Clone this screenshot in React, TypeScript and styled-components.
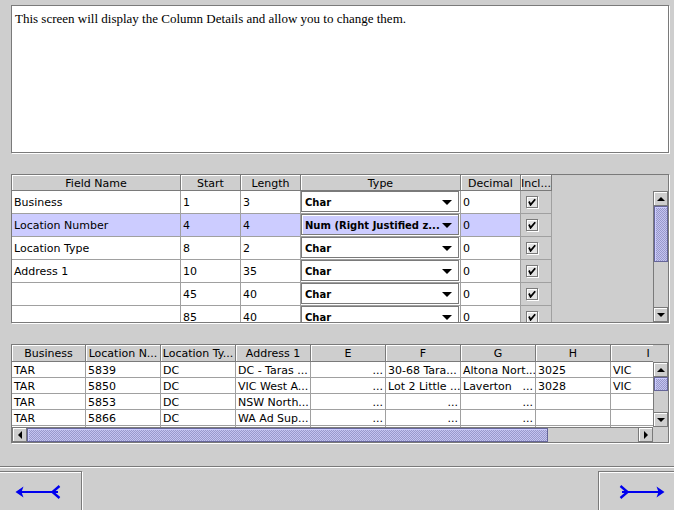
import React from 'react';
import styled, { createGlobalStyle } from 'styled-components';

const GlobalStyle = createGlobalStyle`
  html, body { margin: 0; padding: 0; background: #cecece; }
  #root { width: 674px; height: 510px; }
`;

const BG = '#cecece';
const DARK = '#7a7a7a';
const GRID = '#a0a0a0';
const SEL = '#ccccff';

const Screen = styled.div`
  width: 674px;
  height: 510px;
  overflow: hidden;
  background: ${BG};
  display: flex;
  flex-direction: column;
  font-family: "DejaVu Sans", sans-serif;
  font-size: 11px;
  color: #000;
`;

const Description = styled.div`
  flex: none;
  margin: 5px 5px 0 11px;
  height: 148px;
  box-sizing: border-box;
  background: #fff;
  border: 1px solid ${DARK};
  box-shadow: 1px 1px 0 #fff;
  font-family: "Liberation Serif", serif;
  font-size: 13px;
  line-height: 16px;
  padding: 5px 3px;
`;

const Pane = styled.div<{ $top: number; $height: number; $rows: string }>`
  flex: none;
  margin: ${p => p.$top}px 5px 0 11px;
  height: ${p => p.$height}px;
  box-sizing: border-box;
  border: 1px solid ${DARK};
  box-shadow: 1px 1px 0 #fff;
  display: grid;
  grid-template-columns: minmax(0, 1fr) 15px;
  grid-template-rows: ${p => p.$rows};
  overflow: hidden;
  background: ${BG};
`;

const Clip = styled.div`
  overflow: hidden;
  min-width: 0;
  min-height: 0;
`;

const Corner = styled.div`
  background: ${BG};
`;

const Row = styled.div<{ $cols: string; $h: number }>`
  display: grid;
  grid-template-columns: ${p => p.$cols};
  height: ${p => p.$h}px;
  width: max-content;
`;

const HeaderCell = styled.div`
  box-sizing: border-box;
  height: 100%;
  border-right: 1px solid ${DARK};
  border-bottom: 1px solid ${DARK};
  box-shadow: inset 1px 1px 0 #fff;
  background: ${BG};
  display: flex;
  align-items: center;
  justify-content: center;
  padding-top: 1px;
  white-space: nowrap;
  overflow: hidden;
`;

const Cell = styled.div<{ $bg?: string; $right?: boolean }>`
  box-sizing: border-box;
  height: 100%;
  border-right: 1px solid ${GRID};
  border-bottom: 1px solid ${GRID};
  background: ${p => p.$bg ?? '#fff'};
  padding: 1px 2px 0 2px;
  display: flex;
  align-items: center;
  justify-content: ${p => (p.$right ? 'flex-end' : 'space-between')};
  white-space: nowrap;
  overflow: hidden;
`;

const ComboCell = styled.div`
  box-sizing: border-box;
  height: 100%;
  border-right: 1px solid ${GRID};
  border-bottom: 1px solid ${GRID};
  background: #fff;
`;

const Combo = styled.div<{ $sel?: boolean }>`
  box-sizing: border-box;
  width: calc(100% - 1px);
  height: calc(100% - 1px);
  border: 1px solid ${DARK};
  box-shadow: inset 1px 1px 0 #fff, 1px 1px 0 #fff;
  background: ${p => (p.$sel ? SEL : '#fff')};
  display: flex;
  align-items: center;
  padding: 1px 6px 0 3px;
  font-weight: bold;
  font-size: 10px;
  white-space: nowrap;
  overflow: hidden;
`;

const ComboText = styled.span`
  flex: 1;
  overflow: hidden;
`;

const DownTri = styled.span<{ $size?: number }>`
  width: 0;
  height: 0;
  border-left: ${p => p.$size ?? 5}px solid transparent;
  border-right: ${p => p.$size ?? 5}px solid transparent;
  border-top: ${p => p.$size ?? 5}px solid #000;
`;

const UpTri = styled.span`
  width: 0;
  height: 0;
  border-left: 4px solid transparent;
  border-right: 4px solid transparent;
  border-bottom: 4px solid #000;
`;

const LeftTri = styled.span`
  width: 0;
  height: 0;
  border-top: 4px solid transparent;
  border-bottom: 4px solid transparent;
  border-right: 4px solid #000;
`;

const RightTri = styled.span`
  width: 0;
  height: 0;
  border-top: 4px solid transparent;
  border-bottom: 4px solid transparent;
  border-left: 4px solid #000;
`;

const CheckCell = styled.div`
  box-sizing: border-box;
  height: 100%;
  border-right: 1px solid ${GRID};
  border-bottom: 1px solid ${GRID};
  background: ${BG};
  display: flex;
  align-items: center;
  padding-left: 5px;
`;

const CheckBox = styled.div`
  box-sizing: border-box;
  width: 12px;
  height: 12px;
  border: 1px solid ${DARK};
  box-shadow: inset 1px 1px 0 #fff, 1px 1px 0 #fff;
  background: #e4e4e4;
  display: flex;
  align-items: center;
  justify-content: center;
`;

const VScroll = styled.div`
  display: flex;
  flex-direction: column;
  background: ${BG};
  min-height: 0;
`;

const HScroll = styled.div`
  display: flex;
  flex-direction: row;
  background: ${BG};
  min-width: 0;
`;

const ScrollButton = styled.div`
  flex: none;
  box-sizing: border-box;
  width: 15px;
  height: 15px;
  border: 1px solid ${DARK};
  box-shadow: inset 1px 1px 0 #fff;
  background: ${BG};
  display: flex;
  align-items: center;
  justify-content: center;
`;

const Track = styled.div<{ $horizontal?: boolean }>`
  flex: 1;
  display: flex;
  flex-direction: ${p => (p.$horizontal ? 'row' : 'column')};
  border-${p => (p.$horizontal ? 'top' : 'left')}: 1px solid ${DARK};
  background: ${BG};
  min-height: 0;
  min-width: 0;
`;

const Thumb = styled.div<{ $size: number; $horizontal?: boolean }>`
  flex: none;
  box-sizing: border-box;
  ${p => (p.$horizontal ? `width: ${p.$size}px;` : `height: ${p.$size}px;`)}
  border: 1px solid #666699;
  background-color: #9999cc;
  background-image: repeating-conic-gradient(#c4c4f0 0 25%, #9999cc 0 50%);
  background-size: 2px 2px;
  box-shadow: inset 1px 1px 0 #ccccff;
`;

const Separator = styled.div`
  flex: none;
  margin-top: 23px;
  height: 1px;
  background: ${DARK};
  border-bottom: 1px solid #fff;
`;

const NavBar = styled.div`
  flex: none;
  margin: 3px -12px 0 -6px;
  display: flex;
  justify-content: space-between;
`;

const NavButton = styled.div`
  box-sizing: border-box;
  width: 88px;
  height: 42px;
  border: 1px solid ${DARK};
  box-shadow: inset 1px 1px 0 #fff, 1px 1px 0 #fff;
  background: ${BG};
  display: flex;
  align-items: center;
  justify-content: center;
`;

const Arrow = ({ dir }: { dir: 'left' | 'right' }) => (
  <svg width="46" height="14" viewBox="0 0 46 14" style={{ transform: dir === 'right' ? 'scaleX(-1)' : undefined }}>
    <polygon points="0.5,7 8.5,1.5 6.5,7 8.5,12.5" fill="#0000ee" />
    <rect x="5" y="6" width="38" height="2" fill="#0000ee" />
    <polyline points="44.5,1 37.5,7 44.5,13" fill="none" stroke="#0000ee" strokeWidth="2.4" />
  </svg>
);

const Check = () => (
  <svg width="8" height="8" viewBox="0 0 8 8">
    <path d="M1 3.5 L2.6 6.8 L7.2 1.2" fill="none" stroke="#000" strokeWidth="1.8" />
  </svg>
);

const fieldCols = '169px 60px 60px 160px 60px 31px';
const fieldHeaders = ['Field Name', 'Start', 'Length', 'Type', 'Decimal', 'Incl...'];

const fieldRows = [
  { name: 'Business', start: '1', length: '3', type: 'Char', dec: '0' },
  { name: 'Location Number', start: '4', length: '4', type: 'Num (Right Justified z...', dec: '0', sel: true },
  { name: 'Location Type', start: '8', length: '2', type: 'Char', dec: '0' },
  { name: 'Address 1', start: '10', length: '35', type: 'Char', dec: '0' },
  { name: '', start: '45', length: '40', type: 'Char', dec: '0' },
  { name: '', start: '85', length: '40', type: 'Char', dec: '0' },
];

const dataCols = '74px 75px 75px 75px 75px 75px 75px 75px 75px';
const dataHeaders = ['Business', 'Location N...', 'Location Ty...', 'Address 1', 'E', 'F', 'G', 'H', 'I'];

type DCell = { l?: string; r?: string };
const dataRows: DCell[][] = [
  [{ l: 'TAR' }, { l: '5839' }, { l: 'DC' }, { l: 'DC - Taras ...' }, { r: '...' }, { l: '30-68 Tara...' }, { l: 'Altona Nort...' }, { l: '3025' }, { l: 'VIC' }],
  [{ l: 'TAR' }, { l: '5850' }, { l: 'DC' }, { l: 'VIC West A...' }, { r: '...' }, { l: 'Lot 2 Little ...' }, { l: 'Laverton', r: '...' }, { l: '3028' }, { l: 'VIC' }],
  [{ l: 'TAR' }, { l: '5853' }, { l: 'DC' }, { l: 'NSW North...' }, { r: '...' }, { r: '...' }, { r: '...' }, {}, {}],
  [{ l: 'TAR' }, { l: '5866' }, { l: 'DC' }, { l: 'WA Ad Sup...' }, { r: '...' }, { r: '...' }, { r: '...' }, {}, {}],
  [{}, {}, {}, {}, {}, {}, {}, {}, {}],
];

export default function App() {
  return (
    <>
      <GlobalStyle />
      <Screen>
        <Description>This screen will display the Column Details and allow you to change them.</Description>

        <Pane $top={21} $height={149} $rows="16px minmax(0, 1fr)">
          <Clip>
            <Row $cols={fieldCols} $h={16}>
              {fieldHeaders.map(h => (
                <HeaderCell key={h}>{h}</HeaderCell>
              ))}
            </Row>
          </Clip>
          <Corner />
          <Clip>
            {fieldRows.map((r, i) => (
              <Row key={i} $cols={fieldCols} $h={23}>
                <Cell $bg={r.sel ? SEL : undefined}><span>{r.name}</span></Cell>
                <Cell $bg={r.sel ? SEL : undefined}><span>{r.start}</span></Cell>
                <Cell $bg={r.sel ? SEL : undefined}><span>{r.length}</span></Cell>
                <ComboCell>
                  <Combo $sel={r.sel}>
                    <ComboText>{r.type}</ComboText>
                    <DownTri $size={5} />
                  </Combo>
                </ComboCell>
                <Cell $bg={r.sel ? SEL : undefined}><span>{r.dec}</span></Cell>
                <CheckCell>
                  <CheckBox><Check /></CheckBox>
                </CheckCell>
              </Row>
            ))}
          </Clip>
          <VScroll>
            <ScrollButton><UpTri /></ScrollButton>
            <Track>
              <Thumb $size={56} />
            </Track>
            <ScrollButton><DownTri $size={4} /></ScrollButton>
          </VScroll>
        </Pane>

        <Pane $top={21} $height={99} $rows="17px minmax(0, 1fr) 15px">
          <Clip>
            <Row $cols={dataCols} $h={17}>
              {dataHeaders.map(h => (
                <HeaderCell key={h}>{h}</HeaderCell>
              ))}
            </Row>
          </Clip>
          <Corner />
          <Clip>
            {dataRows.map((r, i) => (
              <Row key={i} $cols={dataCols} $h={16}>
                {r.map((c, j) => (
                  <Cell key={j} $right={!c.l && !!c.r}>
                    {c.l !== undefined && <span>{c.l}</span>}
                    {c.r !== undefined && <span>{c.r}</span>}
                  </Cell>
                ))}
              </Row>
            ))}
          </Clip>
          <VScroll>
            <ScrollButton><UpTri /></ScrollButton>
            <Track>
              <Thumb $size={14} />
            </Track>
            <ScrollButton><DownTri $size={4} /></ScrollButton>
          </VScroll>
          <HScroll>
            <ScrollButton><LeftTri /></ScrollButton>
            <Track $horizontal>
              <Thumb $horizontal $size={521} />
            </Track>
            <ScrollButton><RightTri /></ScrollButton>
          </HScroll>
          <Corner />
        </Pane>

        <Separator />
        <NavBar>
          <NavButton><Arrow dir="left" /></NavButton>
          <NavButton><Arrow dir="right" /></NavButton>
        </NavBar>
      </Screen>
    </>
  );
}
